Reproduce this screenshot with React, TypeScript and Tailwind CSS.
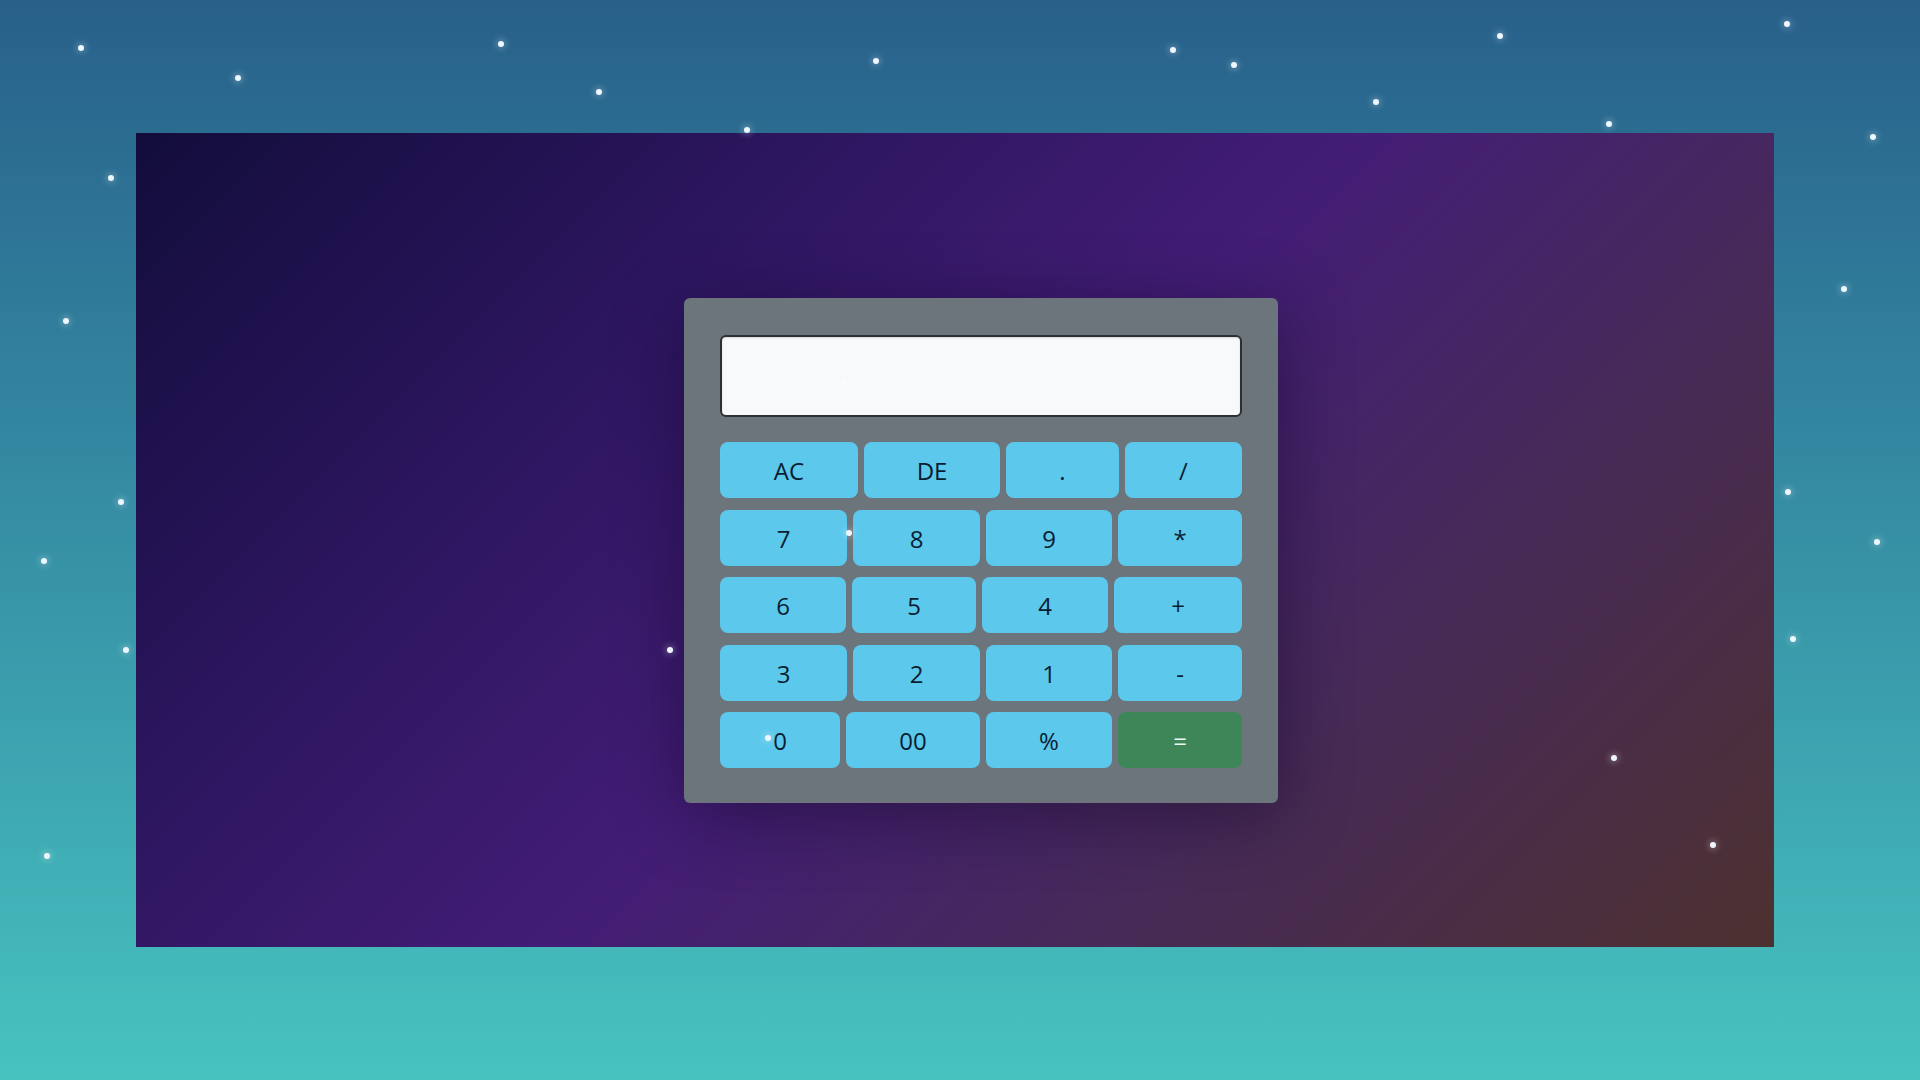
import React from "react";

const stars: [number, number][] = [
  [81, 48], [238, 78], [501, 44], [599, 92], [876, 61], [747, 130], [1173, 50],
  [1234, 65], [1376, 102], [1500, 36], [1787, 24], [1609, 124], [1873, 137],
  [111, 178], [66, 321], [1844, 289], [121, 502], [44, 561], [1788, 492],
  [1877, 542], [126, 650], [670, 650], [1793, 639], [849, 533], [768, 738],
  [1614, 758], [1713, 845], [47, 856],
];

type Btn = { label: string; w: string; eq?: boolean };

const rows: Btn[][] = [
  [
    { label: "AC", w: "w-[138px]" },
    { label: "DE", w: "w-[136px]" },
    { label: ".", w: "w-[113px]" },
    { label: "/", w: "w-[117px]" },
  ],
  [
    { label: "7", w: "w-[127px]" },
    { label: "8", w: "w-[127px]" },
    { label: "9", w: "w-[126px]" },
    { label: "*", w: "w-[124px]" },
  ],
  [
    { label: "6", w: "w-[126px]" },
    { label: "5", w: "w-[124px]" },
    { label: "4", w: "w-[126px]" },
    { label: "+", w: "w-[128px]" },
  ],
  [
    { label: "3", w: "w-[127px]" },
    { label: "2", w: "w-[127px]" },
    { label: "1", w: "w-[126px]" },
    { label: "-", w: "w-[124px]" },
  ],
  [
    { label: "0", w: "w-[120px]" },
    { label: "00", w: "w-[134px]" },
    { label: "%", w: "w-[126px]" },
    { label: "=", w: "w-[124px]", eq: true },
  ],
];

export default function App() {
  return (
    <div
      className="relative w-[1920px] h-[1080px] overflow-hidden bg-linear-to-b from-[#28608a] to-[#47c3c0] pt-[133px] pl-[136px]"
      style={{ fontFamily: '"Open Sans", "Noto Sans", sans-serif' }}
    >
      <div className="w-[1638px] h-[814px] bg-[linear-gradient(135deg,#120d3b_0%,#2d1660_28%,#431d76_50%,#472a58_72%,#4d3130_100%)] pl-[548px] pt-[165px]">
        <div className="w-[594px] h-[505px] rounded-md bg-[#6c747c] px-[36px] pt-[37px] shadow-[0_12px_70px_rgba(10,5,30,0.45)]">
          <div className="h-[82px] w-full rounded-md border-2 border-[#2b3034] bg-[#f8f9fa] shadow-[inset_0_1px_2px_rgba(0,0,0,0.15)]" />
          <div className="mt-[25px] flex flex-col gap-[11.5px]">
            {rows.map((row, i) => (
              <div key={i} className="flex gap-[6px]">
                {row.map((b) => (
                  <button
                    key={b.label}
                    className={`${b.w} h-[56px] flex-none rounded-lg flex items-center justify-center pt-[2px] text-[24px] leading-none ${
                      b.eq ? "bg-[#3e8658] text-[#eef7f0]" : "bg-[#5bc8ec] text-[#0a1d31]"
                    }`}
                  >
                    {b.label}
                  </button>
                ))}
              </div>
            ))}
          </div>
        </div>
      </div>
      {stars.map(([x, y], i) => (
        <div
          key={i}
          className="absolute w-[6px] h-[6px] rounded-full bg-[#eef6ff] shadow-[0_0_6px_2px_rgba(255,255,255,0.25)]"
          style={{ left: x - 3, top: y - 3 }}
        />
      ))}
      <div
        className="absolute w-[4px] h-[4px] rounded-full bg-white opacity-60"
        style={{ left: 843, top: 381 }}
      />
    </div>
  );
}
